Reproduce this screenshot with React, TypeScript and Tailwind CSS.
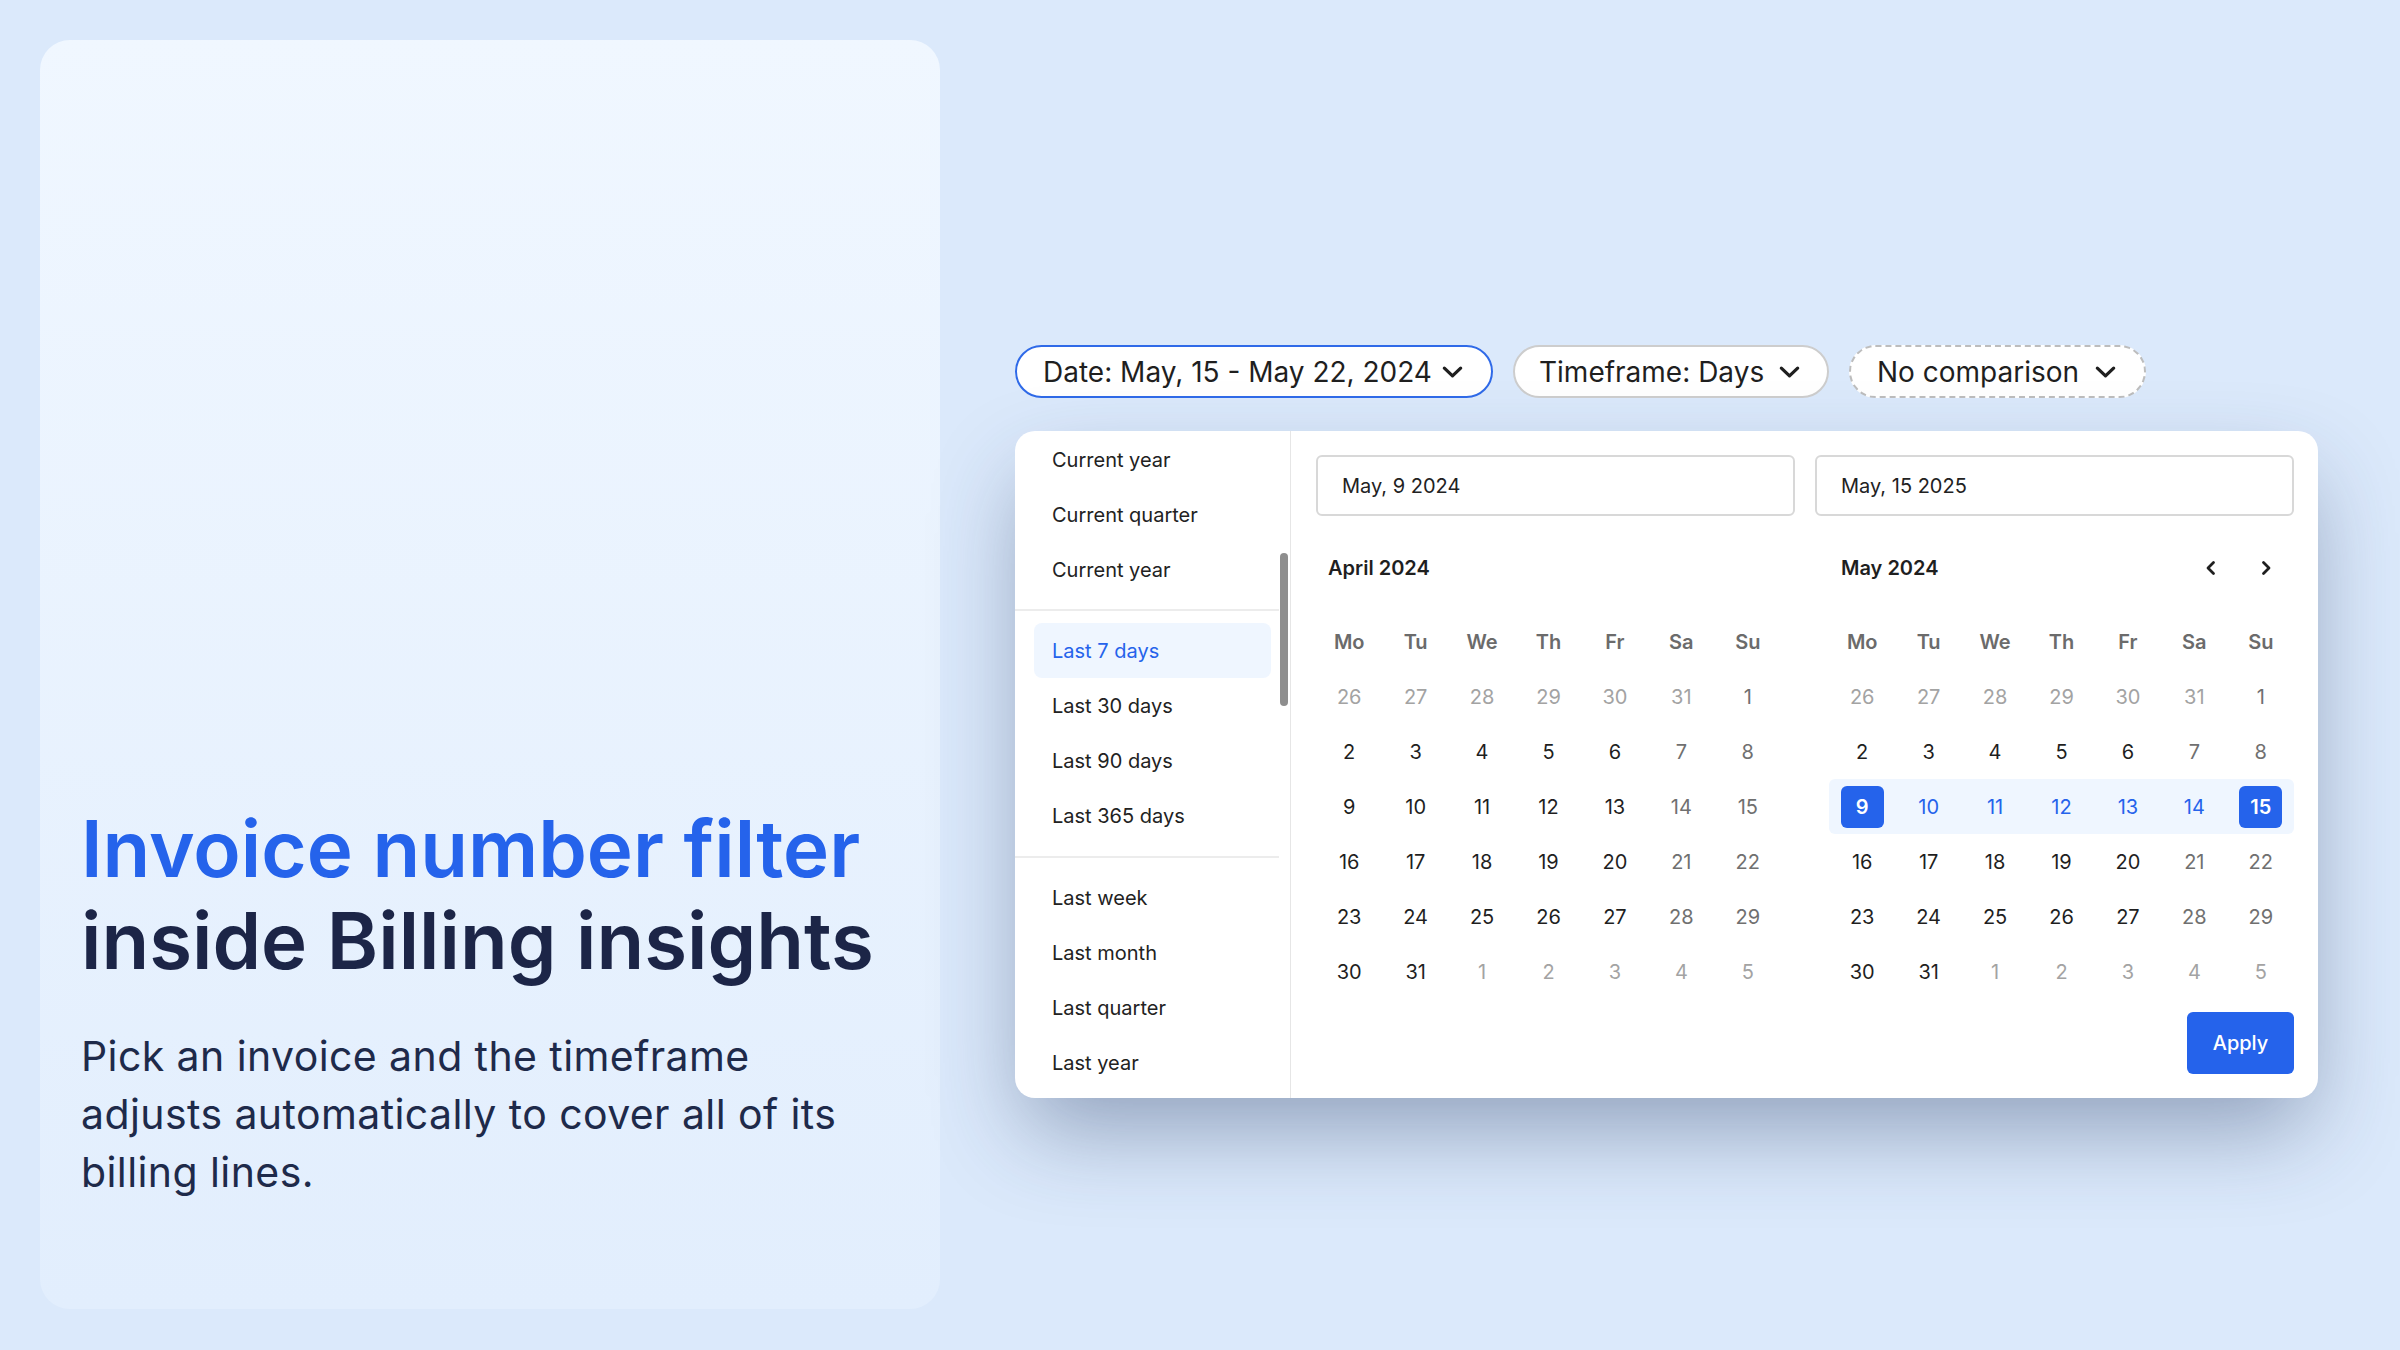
import React from 'react'

// * SMALL ICONS
function ChevronDown() {
  return (
    <svg viewBox="0 0 24 14" className="h-[14px] w-[23px] shrink-0" fill="none" stroke="#1f1f1f" strokeWidth="3.4" strokeLinecap="round" strokeLinejoin="round">
      <path d="M3.5 3 L12 11 L20.5 3" />
    </svg>
  )
}

function ChevronSide({ dir }: { dir: 'left' | 'right' }) {
  return (
    <svg viewBox="0 0 24 24" className="h-6 w-6" fill="none" stroke="#1f1f1f" strokeWidth="2.8" strokeLinecap="round" strokeLinejoin="round">
      {dir === 'left' ? <path d="M14.5 6.5 L9 12 L14.5 17.5" /> : <path d="M9.5 6.5 L15 12 L9.5 17.5" />}
    </svg>
  )
}

// * DATA
const weekdays = ['Mo', 'Tu', 'We', 'Th', 'Fr', 'Sa', 'Su']

const monthRows = [
  [26, 27, 28, 29, 30, 31, 1],
  [2, 3, 4, 5, 6, 7, 8],
  [9, 10, 11, 12, 13, 14, 15],
  [16, 17, 18, 19, 20, 21, 22],
  [23, 24, 25, 26, 27, 28, 29],
  [30, 31, 1, 2, 3, 4, 5],
]

const presetGroups = [
  ['Current year', 'Current quarter', 'Current year'],
  ['Last 7 days', 'Last 30 days', 'Last 90 days', 'Last 365 days'],
  ['Last week', 'Last month', 'Last quarter', 'Last year'],
]

function DayCell({ day, row, col, withRange }: { day: number; row: number; col: number; withRange: boolean }) {
  const outside = (row === 0 && day > 7) || (row === 5 && day < 7)
  const weekend = col >= 5
  const isEdge = withRange && row === 2 && (col === 0 || col === 6)
  const inRange = withRange && row === 2 && !isEdge

  if (isEdge) {
    return (
      <div className="flex h-[55px] items-center justify-center">
        <span className="flex h-[42px] w-[43px] items-center justify-center rounded-[6px] bg-[#2563eb] text-[20px] font-semibold text-white">{day}</span>
      </div>
    )
  }

  let color = 'text-[#1f1f1f]'
  if (outside) color = 'text-[#a3a3a3]'
  else if (inRange) color = 'text-[#2563eb]'
  else if (weekend) color = 'text-[#707070]'

  return <div className={`flex h-[55px] items-center justify-center text-[20px] ${color}`}>{day}</div>
}

function Month({ title, withRange, withNav }: { title: string; withRange?: boolean; withNav?: boolean }) {
  return (
    <div className="flex w-[465px] flex-col">
      <div className="flex h-[28px] items-center justify-between pl-3">
        <span className="text-[20px] font-semibold text-[#1f1f1f]">{title}</span>
        {withNav && (
          <div className="flex items-center gap-[31px] pr-4">
            <ChevronSide dir="left" />
            <ChevronSide dir="right" />
          </div>
        )}
      </div>
      <div className="mt-[32px] grid grid-cols-7">
        {weekdays.map((w) => (
          <div key={w} className="flex h-[55px] items-center justify-center text-[20px] font-semibold text-[#6b6b6b]">
            {w}
          </div>
        ))}
      </div>
      {monthRows.map((r, ri) => (
        <div key={ri} className={`grid grid-cols-7 rounded-[6px] ${withRange && ri === 2 ? 'bg-[#eff6ff]' : ''}`}>
          {r.map((d, ci) => (
            <DayCell key={ci} day={d} row={ri} col={ci} withRange={!!withRange} />
          ))}
        </div>
      ))}
    </div>
  )
}

export default function App() {
  return (
    <div className="flex h-[1350px] w-[2400px] items-start overflow-hidden bg-[#dbe9fb] font-['Inter',sans-serif]">
      {/* left promo card */}
      <div className="ml-[40px] mt-[40px] flex h-[1269px] w-[900px] shrink-0 flex-col justify-end rounded-[30px] bg-gradient-to-b from-[#f0f7ff] to-[#e2eefd] px-[41px] pb-[108px]">
        <h1 className="text-[78px] font-semibold leading-[92px]">
          <span className="block text-[#2563eb]">Invoice number filter</span>
          <span className="block text-[#1c2547]">inside Billing insights</span>
        </h1>
        <p className="mt-[40px] w-[790px] text-[41px] leading-[58px] tracking-[0.01em] text-[#1e2a4a]">
          Pick an invoice and the timeframe adjusts automatically to cover all of its billing lines.
        </p>
      </div>

      {/* right side: filters + date picker */}
      <div className="ml-[75px] flex flex-col pt-[345px]">
        <div className="flex items-center gap-[20px] text-[28px] text-[#1f1f1f]">
          <button className="flex h-[53px] w-[478px] items-center justify-between rounded-full border-2 border-[#2f6ae8] bg-white pl-[26px] pr-[27px]">
            <span>Date: May, 15 - May 22, 2024</span>
            <ChevronDown />
          </button>
          <button className="flex h-[53px] w-[316px] items-center justify-between rounded-full border-2 border-[#cdcdcd] bg-white pl-[24px] pr-[26px]">
            <span>Timeframe: Days</span>
            <ChevronDown />
          </button>
          <button className="flex h-[53px] w-[297px] items-center justify-between rounded-full border-2 border-dashed border-[#bdbdbd] bg-white pl-[26px] pr-[27px]">
            <span>No comparison</span>
            <ChevronDown />
          </button>
        </div>

        <div className="mt-[33px] flex h-[667px] w-[1303px] overflow-hidden rounded-[20px] bg-white shadow-[0_40px_90px_-10px_rgba(40,60,100,0.42)]">
          {/* presets */}
          <div className="relative w-[276px] shrink-0 border-r border-[#e6e6e6] pt-[1px]">
            {presetGroups.map((group, gi) => (
              <div key={gi}>
                {gi > 0 && <div className={`mr-[11px] h-[2px] bg-[#ececec] ${gi === 1 ? 'my-[12px]' : 'mt-[13px] mb-[12px]'}`} />}
                {group.map((item) => {
                  const active = item === 'Last 7 days'
                  return (
                    <div
                      key={item + gi}
                      className={`mx-[19px] flex h-[55px] items-center rounded-[8px] pl-[18px] text-[20px] ${
                        active ? 'bg-[#eff6ff] text-[#2563eb]' : 'text-[#222222]'
                      }`}
                    >
                      {item}
                    </div>
                  )
                })}
              </div>
            ))}
            <div className="absolute left-[265px] top-[122px] h-[153px] w-[8px] rounded-full bg-[#8e8e8e]" />
          </div>

          {/* calendars */}
          <div className="flex flex-1 flex-col pl-[25px] pr-[24px] pt-[24px]">
            <div className="flex gap-[20px]">
              <div className="flex h-[61px] w-[479px] items-center rounded-[6px] border-2 border-[#d8d8d8] pl-[24px] text-[20px] text-[#222222]">May, 9 2024</div>
              <div className="flex h-[61px] w-[479px] items-center rounded-[6px] border-2 border-[#d8d8d8] pl-[24px] text-[20px] text-[#222222]">May, 15 2025</div>
            </div>
            <div className="mt-[38px] flex w-[978px] justify-between">
              <Month title="April 2024" />
              <Month title="May 2024" withRange withNav />
            </div>
            <div className="mt-[13px] flex w-[978px] justify-end">
              <button className="h-[62px] w-[107px] rounded-[6px] bg-[#2563eb] text-[20px] font-medium text-white">Apply</button>
            </div>
          </div>
        </div>
      </div>
    </div>
  )
}
